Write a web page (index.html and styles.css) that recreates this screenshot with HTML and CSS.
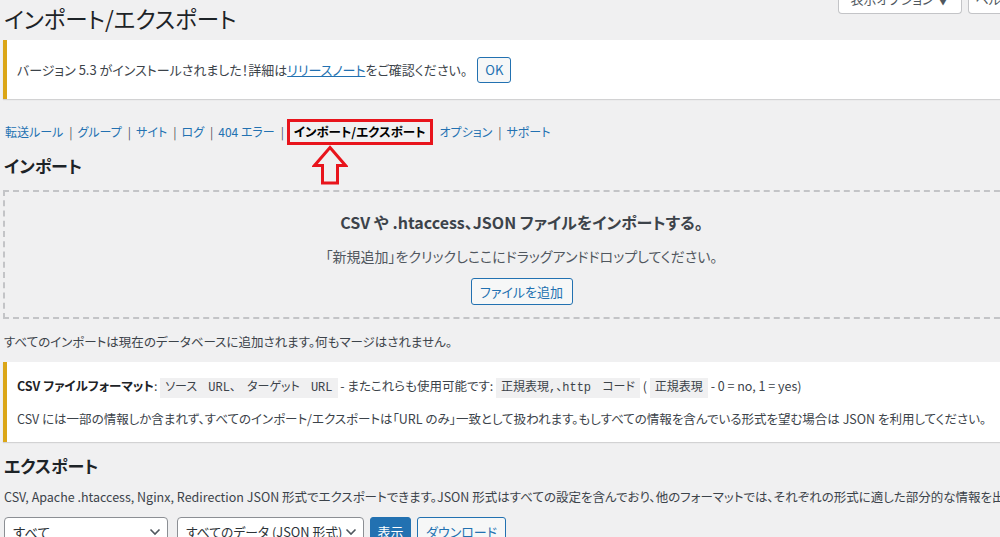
FILE: index.html
```html
<!DOCTYPE html>
<html lang="ja">
<head>
<meta charset="utf-8">
<title>インポート/エクスポート</title>
<link rel="stylesheet" href="styles.css">
</head>
<body>
<div class="page">
  <div class="screen-meta">
    <button class="meta-btn meta-options">表示オプション ▼</button>
    <button class="meta-btn meta-help">ヘルプ ▼</button>
  </div>
  <h1 class="title">インポート/エクスポート</h1>

  <div class="notice notice-update">
    <p class="notice-text">バージョン 5.3 がインストールされました！詳細は<a href="#" class="link-under">リリースノート</a>をご確認ください。</p>
    <button class="btn btn-secondary btn-ok">OK</button>
  </div>

  <ul class="subsubsub">
    <li><a href="#">転送ルール</a><span class="sep">|</span></li>
    <li><a href="#">グループ</a><span class="sep">|</span></li>
    <li><a href="#">サイト</a><span class="sep">|</span></li>
    <li><a href="#">ログ</a><span class="sep">|</span></li>
    <li><a href="#">404 エラー</a><span class="sep">|</span></li>
    <li class="current-wrap"><span class="current">インポート/エクスポート</span>
      <svg class="annot-arrow" width="36" height="40" viewBox="0 0 36 40" aria-hidden="true">
        <path d="M18 2.5 L33.5 20.5 L25.5 20.5 L25.5 38 L10.5 38 L10.5 20.5 L2.5 20.5 Z" fill="none" stroke="#e8141c" stroke-width="3" stroke-linejoin="miter"/>
      </svg>
    </li>
    <li><a href="#">オプション</a><span class="sep">|</span></li>
    <li><a href="#">サポート</a></li>
  </ul>

  <h2 class="section-title">インポート</h2>

  <div class="dropzone">
    <h3 class="drop-title">CSV や .htaccess、JSON ファイルをインポートする。</h3>
    <p class="drop-text">「新規追加」をクリックしここにドラッグアンドドロップしてください。</p>
    <button class="btn btn-secondary btn-add">ファイルを追加</button>
  </div>

  <p class="plain">すべてのインポートは現在のデータベースに追加されます。何もマージはされません。</p>

  <div class="notice notice-csv">
    <p class="csv-line"><strong>CSV ファイルフォーマット</strong>: <code>ソース URL、 ターゲット URL</code> - またこれらも使用可能です: <code>正規表現,、http コード</code> ( <code>正規表現</code> - 0 = no, 1 = yes)</p>
    <p class="csv-line2">CSV には一部の情報しか含まれず、すべてのインポート/エクスポートは「URL のみ」一致として扱われます。もしすべての情報を含んでいる形式を望む場合は JSON を利用してください。</p>
  </div>

  <h2 class="section-title export-title">エクスポート</h2>
  <p class="plain export-text">CSV, Apache .htaccess, Nginx, Redirection JSON 形式でエクスポートできます。JSON 形式はすべての設定を含んでおり、他のフォーマットでは、それぞれの形式に適した部分的な情報を出力します。</p>

  <div class="export-controls">
    <div class="select select-a"><span class="select-text">すべて</span>
      <svg class="chev" width="12" height="8" viewBox="0 0 12 8"><path d="M1.5 1.5 L6 6 L10.5 1.5" fill="none" stroke="#50575e" stroke-width="1.6"/></svg>
    </div>
    <div class="select select-b"><span class="select-text">すべてのデータ (JSON 形式)</span>
      <svg class="chev" width="12" height="8" viewBox="0 0 12 8"><path d="M1.5 1.5 L6 6 L10.5 1.5" fill="none" stroke="#50575e" stroke-width="1.6"/></svg>
    </div>
    <button class="btn btn-primary btn-view">表示</button>
    <button class="btn btn-secondary btn-dl">ダウンロード</button>
  </div>
</div>
</body>
</html>
```

FILE: styles.css
```css
* { box-sizing: border-box; }

html, body {
  margin: 0;
  padding: 0;
  background: #f0f0f1;
  overflow: hidden;
}

body {
  font-family: "Noto Sans CJK JP", sans-serif;
  font-size: 12.5px;
  line-height: 18px;
  color: #3c434a;
  font-feature-settings: "palt";
}

.page {
  width: 1040px;
  padding-left: 3px;
}

/* screen meta */
.screen-meta {
  float: right;
  display: flex;
  gap: 6px;
  margin-top: -15px;
  margin-right: 4px;
}
.meta-btn {
  height: 29px;
  border: 1px solid #c3c4c7;
  border-top: none;
  border-radius: 0 0 4px 4px;
  background: #fff;
  color: #50575e;
  font: inherit;
  font-size: 13px;
  padding: 0 6px;
  white-space: nowrap;
  text-align: center;
}
.meta-options { width: 124px; }
.meta-help { width: 68px; }

.title {
  margin: 0;
  padding: 4px 0 0 1px;
  font-size: 22.5px;
  line-height: 29px;
  font-weight: 400;
  color: #1d2327;
}

/* notices */
.notice {
  background: #fff;
  border-left: 4px solid #dba617;
  box-shadow: 0 1px 1px rgba(0, 0, 0, 0.12);
}
.notice-update {
  margin-top: 7px;
  display: flex;
  align-items: center;
  gap: 10px;
  padding: 17px 12px 16px 10px;
}
.notice-text { margin: 0; font-size: 13px; }
a { color: #2271b1; text-decoration: none; }
.link-under { text-decoration: underline; }

.btn {
  font: inherit;
  font-size: 13px;
  border-radius: 3px;
  cursor: pointer;
  white-space: nowrap;
}
.btn-secondary {
  background: #f6f7f7;
  border: 1px solid #2271b1;
  color: #2271b1;
}
.btn-primary {
  background: #2271b1;
  border: 1px solid #2271b1;
  color: #fff;
}
.btn-ok {
  width: 34px;
  height: 26px;
  padding: 0;
}

/* tabs */
.subsubsub {
  list-style: none;
  margin: 20px 0 0;
  padding: 0 0 0 2px;
  display: flex;
  align-items: center;
  height: 26px;
  font-size: 12px;
}
.subsubsub li { display: flex; align-items: center; white-space: nowrap; }
.sep { color: #50575e; padding: 0 5px 0 6px; }
.current-wrap { position: relative; margin-right: 7px; margin-left: -2px; }
.current {
  display: inline-block;
  border: 3px solid #e8141c;
  padding: 1px 4px;
  line-height: 18px;
  font-size: 12.5px;
  font-weight: 700;
  color: #000;
  background: #f0f0f1;
}
.annot-arrow {
  position: absolute;
  top: 100%;
  left: 25px;
}

.section-title {
  margin: 10px 0 0 1px;
  font-size: 17px;
  line-height: 22px;
  font-weight: 700;
  color: #1d2327;
}

/* dropzone */
.dropzone {
  margin-top: 13px;
  border: 2px dashed #c3c4c7;
  padding: 18px 0 12px;
  text-align: center;
}
.drop-title {
  margin: 0;
  font-size: 16px;
  line-height: 24px;
  font-weight: 700;
  color: #3c434a;
}
.drop-text {
  margin: 13px 0 0;
  font-size: 14px;
  color: #50575e;
}
.btn-add {
  margin-top: 13px;
  height: 27px;
  width: 102px;
  padding: 0;
}

.plain {
  margin: 14px 0 0 1px;
  white-space: nowrap;
}

.notice-csv {
  margin-top: 11px;
  padding: 12px 12px 14px 10px;
}
.csv-line {
  margin: 0;
  line-height: 24px;
  white-space: nowrap;
}
.csv-line strong { font-weight: 700; color: #1d2327; }
code {
  font-family: "Liberation Mono", "Noto Sans CJK JP", monospace;
  font-size: 12px;
  background: #f0f0f1;
  padding: 3px 5px 3px;
  color: #3c434a;
  word-spacing: 4px;
}
.csv-line2 {
  margin: 10px 0 0;
  white-space: nowrap;
}

.export-title { margin-top: 13px; }
.export-text { margin-top: 11px; }

.export-controls {
  margin: 11px 0 0 1px;
  display: flex;
  gap: 6px;
  align-items: flex-start;
}
.select {
  height: 30px;
  background: #fff;
  border: 1px solid #8c8f94;
  border-radius: 4px;
  display: flex;
  align-items: center;
  justify-content: space-between;
  gap: 2px;
  padding: 0 6px 0 8px;
  font-size: 13.5px;
  color: #2c3338;
  white-space: nowrap;
  overflow: hidden;
}
.select-b { font-size: 12.8px; }
.select-text { overflow: hidden; }
.select-a { width: 164px; margin-right: 3px; }
.select-b { width: 187px; }
.chev { flex: none; }
.btn-view { width: 41px; height: 30px; padding: 0; }
.btn-dl { width: 89px; height: 30px; padding: 0; }
```
